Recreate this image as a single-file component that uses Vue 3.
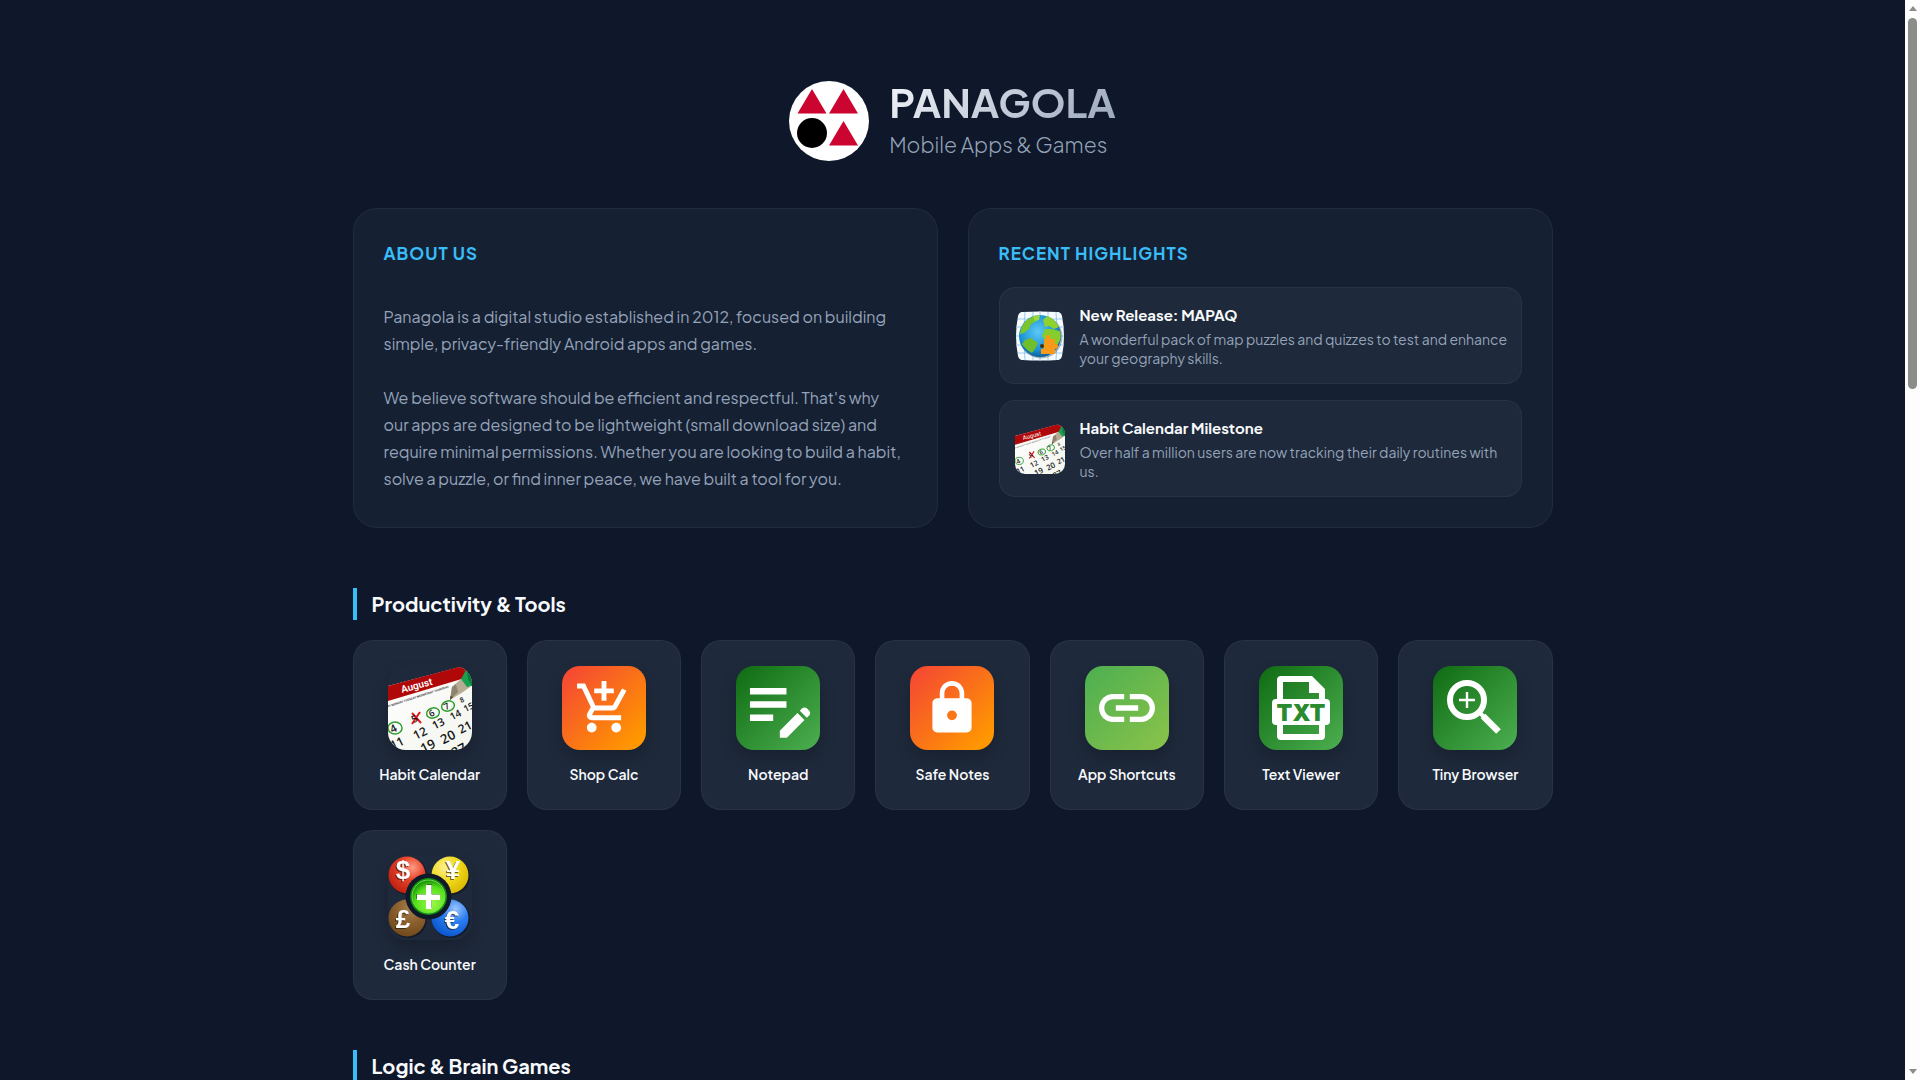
<script setup>
import { h } from 'vue';

const highlights = [
  {
    icon: 'mapaq',
    title: 'New Release: MAPAQ',
    text: 'A wonderful pack of map puzzles and quizzes to test and enhance your geography skills.'
  },
  {
    icon: 'calendar',
    title: 'Habit Calendar Milestone',
    text: 'Over half a million users are now tracking their daily routines with us.'
  }
];

const tools = [
  { id: 'calendar', name: 'Habit Calendar' },
  { id: 'cart', name: 'Shop Calc', tile: 'orange' },
  { id: 'notepad', name: 'Notepad', tile: 'green' },
  { id: 'lock', name: 'Safe Notes', tile: 'orange' },
  { id: 'link', name: 'App Shortcuts', tile: 'lime' },
  { id: 'txt', name: 'Text Viewer', tile: 'green' },
  { id: 'browser', name: 'Tiny Browser', tile: 'green' },
  { id: 'cash', name: 'Cash Counter' }
];

// calendar page digits: [label, x, y, size]
const days = [
  ['4', 7, 66, 11], ['5', 28, 56, 10], ['6', 45, 50, 9], ['7', 60, 43, 9], ['8', 75, 36, 7],
  ['11', 11, 81, 12], ['12', 34, 71, 12], ['13', 52, 61, 11], ['14', 69, 52, 10], ['15', 82, 44, 9],
  ['19', 42, 84, 13], ['20', 62, 75, 13], ['21', 79, 65, 12], ['27', 73, 88, 13]
];

// lettering printed on the calendar page
const CalendarText = () => h('g', { 'font-family': 'Roboto, sans-serif' }, [
  h('text', { x: 14, y: 27, 'font-size': 10, fill: '#fff', transform: 'rotate(-15 14 27)' }, 'August'),
  h('text', { x: -8, y: 44, 'font-size': 3, fill: '#333', transform: 'rotate(-18 -8 44)' }, 'SUNDAY MONDAY TUESDAY WEDNESDAY THURSDAY'),
  ...days.map(([label, x, y, size]) => h('text', {
    x,
    y,
    'font-family': 'Open Sans, sans-serif',
    'font-size': size,
    'font-weight': 600,
    'text-anchor': 'middle',
    fill: '#151515',
    transform: `rotate(-27 ${x} ${y})`
  }, label))
]);

// coin balls: [symbol, cx, cy, gradient, text x, text y]
const coins = [
  ['$', 19, 19, 'coin-red', 15, 23],
  ['¥', 62, 19, 'coin-yellow', 65, 23],
  ['£', 19, 62, 'coin-brown', 15, 72],
  ['€', 62, 62, 'coin-blue', 64, 73]
];
</script>

<template>
  <div class="window">
    <!-- shared icon artwork -->
    <svg class="defs" aria-hidden="true">
      <defs>
        <radialGradient id="coin-red" cx="0.65" cy="0.3" r="0.8">
          <stop offset="0" stop-color="#ff9c86" />
          <stop offset="0.4" stop-color="#e8452b" />
          <stop offset="1" stop-color="#b81c0c" />
        </radialGradient>
        <radialGradient id="coin-yellow" cx="0.35" cy="0.3" r="0.8">
          <stop offset="0" stop-color="#fdf08c" />
          <stop offset="0.5" stop-color="#f0d81a" />
          <stop offset="1" stop-color="#d8b400" />
        </radialGradient>
        <radialGradient id="coin-brown" cx="0.6" cy="0.25" r="0.8">
          <stop offset="0" stop-color="#a88050" />
          <stop offset="0.5" stop-color="#8a5f2c" />
          <stop offset="1" stop-color="#6e4619" />
        </radialGradient>
        <radialGradient id="coin-blue" cx="0.65" cy="0.25" r="0.8">
          <stop offset="0" stop-color="#9cc4ff" />
          <stop offset="0.45" stop-color="#2a7df0" />
          <stop offset="1" stop-color="#0a55cc" />
        </radialGradient>
        <radialGradient id="plus-green" cx="0.6" cy="0.7" r="0.7">
          <stop offset="0" stop-color="#9dfa4a" />
          <stop offset="0.7" stop-color="#58e01c" />
          <stop offset="1" stop-color="#189008" />
        </radialGradient>
        <radialGradient id="sea" cx="0.45" cy="0.4" r="0.6">
          <stop offset="0" stop-color="#5cc8f5" />
          <stop offset="0.7" stop-color="#1d94d6" />
          <stop offset="1" stop-color="#0c5f9c" />
        </radialGradient>
        <linearGradient id="paper" x1="0" y1="0" x2="1" y2="1">
          <stop offset="0" stop-color="#ffffff" />
          <stop offset="1" stop-color="#f3f5ee" />
        </linearGradient>
      </defs>

      <symbol id="calendar" viewBox="0 0 84 84">
        <path d="M0 20 72 1Q84 3 84 16V84H0Z" fill="url(#paper)" />
        <path d="M0 20 71 1Q77 1 81 6L77 12 0 35Z" fill="#b00808" />
        <g fill="none" stroke="#2f9e2f" stroke-width="1.5">
          <ellipse cx="7" cy="62" rx="7" ry="6" />
          <ellipse cx="45" cy="47" rx="6.5" ry="5" transform="rotate(-15 45 47)" />
          <ellipse cx="60" cy="40" rx="6.5" ry="5" transform="rotate(-15 60 40)" />
        </g>
        <path d="M24 47 33 57M32 46 24 58" stroke="#e01818" stroke-width="2" />
        <path d="M62 34 64 21 73 13 82 21 75 26Z" fill="#b8ab93" />
        <path d="M62 34 64 21 68 18 70 26Z" fill="#8f846d" />
        <path d="M62 34 62.5 30 65 31Z" fill="#4a4a40" />
        <path d="M73 13 78 4 84 8V20L79 21 76 17Z" fill="#18a050" />
        <path d="M79 4 84 8V20L80 13Z" fill="#0d7a3a" />
      </symbol>

      <symbol id="mapaq" viewBox="0 0 50 50">
        <path d="M7 1Q25 0 43 1Q46 1 47 5Q51 25 47 45Q46 49 43 49Q25 50 7 49Q4 49 3 45Q-1 25 3 5Q4 1 7 1Z" fill="#f6fbff" />
        <path
          d="M10 1Q7 25 10 49M18 1V49M25 0V50M33 1V49M41 1Q44 25 41 49M3 8H47M1 16H49M1 25H49M1 34H49M3 42H47"
          fill="none"
          stroke="#9cc9ee"
          stroke-width="1"
        />
        <circle cx="26" cy="26" r="21.5" fill="#59717e" opacity="0.5" />
        <circle cx="25" cy="25" r="21" fill="url(#sea)" />
        <path d="M7 15Q12 7 20 5L24 7 20 11 16 13 14 18 9 22 5 23Z" fill="#7cc62c" />
        <path d="M18 5 25 4 24 9 20 10Z" fill="#9ad83e" />
        <path d="M10 29 16 27 23 32 20 38 17 42Q10 38 7 33Z" fill="#6fbf2a" />
        <path d="M28 9 32 5Q40 8 44 16L39 18 34 15 30 16Z" fill="#8fd22e" />
        <path d="M30 18 36 18 45 20Q47 28 43 33L36 36 31 30 27 25Z" fill="#86cc2c" />
        <path d="M26 34H29V28H31Q30 24 33 24T35 28H40V33Q43 32 43 35T40 38V43H26V38Q29 38 29 36T26 34Z" fill="#f79a1a" />
        <circle cx="27" cy="35" r="2" fill="#4a3208" />
      </symbol>

      <symbol id="cart" viewBox="0 0 84 84">
        <path
          transform="translate(12.6 12.6) scale(2.45)"
          d="M11 9h2V6h3V4h-3V1h-2v3H8v2h3v3zm-4 9c-1.1 0-1.99.9-1.99 2S5.9 22 7 22s2-.9 2-2-.9-2-2-2zm10 0c-1.1 0-1.99.9-1.99 2s.89 2 1.99 2 2-.9 2-2-.9-2-2-2zm-9.83-3.25l.03-.12.9-1.63h7.45c.75 0 1.41-.41 1.75-1.03l3.86-7.01L19.42 4h-.01l-1.1 2-2.76 5H8.53l-.13-.27L6.16 6l-.95-2-.94-2H1v2h2l3.6 7.59-1.35 2.45c-.16.28-.25.61-.25.96 0 1.1.9 2 2 2h12v-2H7.42c-.13 0-.25-.11-.25-.25z"
        />
      </symbol>

      <symbol id="notepad" viewBox="0 0 84 84">
        <path
          transform="translate(4 2) scale(3.32)"
          d="M3 10h11v2H3v-2zm0-2h11V6H3v2zm0 8h7v-2H3v2zm15.01-3.13.71-.71c.39-.39 1.02-.39 1.41 0l.71.71c.39.39.39 1.02 0 1.41l-.71.71-2.12-2.12zm-.71.71-5.3 5.3V21h2.12l5.3-5.3-2.12-2.12z"
        />
      </symbol>

      <symbol id="lock" viewBox="0 0 84 84">
        <path
          transform="translate(12.6 12.6) scale(2.45)"
          d="M18 8h-1V6c0-2.76-2.24-5-5-5S7 3.24 7 6v2H6c-1.1 0-2 .9-2 2v10c0 1.1.9 2 2 2h12c1.1 0 2-.9 2-2V10c0-1.1-.9-2-2-2zm-6 9c-1.1 0-2-.9-2-2s.9-2 2-2 2 .9 2 2-.9 2-2 2zm3.1-9H8.9V6c0-1.71 1.39-3.1 3.1-3.1 1.71 0 3.1 1.39 3.1 3.1v2z"
        />
      </symbol>

      <symbol id="link" viewBox="0 0 84 84">
        <path
          transform="translate(8.4 8.4) scale(2.8)"
          d="M3.9 12c0-1.71 1.39-3.1 3.1-3.1h4V7H7c-2.76 0-5 2.24-5 5s2.24 5 5 5h4v-1.9H7c-1.71 0-3.1-1.39-3.1-3.1zM8 13h8v-2H8v2zm9-6h-4v1.9h4c1.71 0 3.1 1.39 3.1 3.1s-1.39 3.1-3.1 3.1h-4V17h4c2.76 0 5-2.24 5-5s-2.24-5-5-5z"
        />
      </symbol>

      <symbol id="txt" viewBox="0 0 84 84">
        <path
          fill-rule="evenodd"
          d="M22 10H53L66 23V70Q66 74 62 74H22Q18 74 18 70V14Q18 10 22 10ZM24 16V34H60V27H50V16ZM24 58V68H60V58Z"
        />
        <rect x="13" y="33" width="58" height="26" rx="4" />
      </symbol>

      <symbol id="browser" viewBox="0 0 84 84">
        <circle cx="34" cy="34" r="17" fill="none" stroke="#fff" stroke-width="6" />
        <path d="M26 34H42M34 26V42" stroke="#fff" stroke-width="2.4" />
        <path d="M46 46 52 52" stroke="#fff" stroke-width="4" />
        <path d="M50 50 65.5 65.5" stroke="#fff" stroke-width="6.5" />
      </symbol>

      <symbol id="cash" viewBox="0 0 84 84">
        <g v-for="[symbol, cx, cy, fill] in coins" :key="symbol">
          <circle :cx="cx + 1" :cy="cy + 1" r="19" fill="#0b1220" opacity="0.6" />
          <circle :cx="cx" :cy="cy" r="18.5" :fill="`url(#${fill})`" />
        </g>
        <circle cx="40.5" cy="40.5" r="23" fill="#10192a" />
        <circle cx="40.5" cy="40.5" r="18.5" fill="#128a0c" />
        <circle cx="40.5" cy="40.5" r="16.5" fill="url(#plus-green)" stroke="#6fe04a" stroke-width="1" />
        <path d="M39 28H44V38H52V43H44V52H39V43H28V38H39Z" fill="#1c7010" opacity="0.8" />
        <path d="M38 29H43.5V38.5H52V44H43.5V53H38V44H29V38.5H38Z" fill="#fff" />
      </symbol>
    </svg>

    <main class="page">
      <div class="container">
        <header class="brand">
          <svg class="logo" viewBox="0 0 80 80" role="img" aria-label="Panagola logo">
            <circle cx="40" cy="40" r="40" fill="#fff" />
            <path d="M23 8 37.5 32.5H8.5ZM54.5 8 69 32.5H40ZM54.5 40 69 64.5H40Z" fill="#cc0530" />
            <circle cx="23" cy="52" r="15" fill="#000" />
          </svg>
          <div>
            <h1>PANAGOLA</h1>
            <p>Mobile Apps &amp; Games</p>
          </div>
        </header>

        <div class="intro">
          <section class="panel">
            <h2>About Us</h2>
            <div class="about">
              <p>Panagola is a digital studio established in 2012, focused on building simple, privacy-friendly Android apps and games.</p>
              <p>We believe software should be efficient and respectful. That's why our apps are designed to be lightweight (small download size) and require minimal permissions. Whether you are looking to build a habit, solve a puzzle, or find inner peace, we have built a tool for you.</p>
            </div>
          </section>

          <section class="panel">
            <h2>Recent Highlights</h2>
            <div class="highlights">
              <a v-for="item in highlights" :key="item.title" class="highlight" href="#">
                <svg class="highlight-icon" :viewBox="item.icon === 'calendar' ? '0 0 84 84' : '0 0 50 50'">
                  <use :href="`#${item.icon}`" />
                  <CalendarText v-if="item.icon === 'calendar'" />
                </svg>
                <div>
                  <h3>{{ item.title }}</h3>
                  <p>{{ item.text }}</p>
                </div>
              </a>
            </div>
          </section>
        </div>

        <section class="category">
          <h2>Productivity &amp; Tools</h2>
          <div class="grid">
            <a v-for="app in tools" :key="app.id" class="app" href="#">
              <svg class="app-icon" :class="app.tile" viewBox="0 0 84 84">
                <use :href="`#${app.id}`" />
                <CalendarText v-if="app.id === 'calendar'" />
                <text v-else-if="app.id === 'txt'" class="txt-label" x="42" y="55">TXT</text>
                <template v-else-if="app.id === 'cash'">
                  <text v-for="coin in coins" :key="coin[0]" class="coin" :x="coin[4]" :y="coin[5]">{{ coin[0] }}</text>
                </template>
              </svg>
              <span>{{ app.name }}</span>
            </a>
          </div>
        </section>

        <section class="category">
          <h2>Logic &amp; Brain Games</h2>
        </section>
      </div>
    </main>

    <div class="scrollbar" aria-hidden="true">
      <i class="arrow up"></i>
      <div class="track"><div class="thumb"></div></div>
      <i class="arrow down"></i>
    </div>
  </div>
</template>

<style>
body {
  margin: 0;
  background: #0f172a;
}
</style>

<style scoped>
.window {
  display: flex;
  height: 100vh;
  overflow: hidden;
  background: #0f172a;
  color: #f8fafc;
  font-family: "Plus Jakarta Sans", Inter, "Liberation Sans", sans-serif;
}

.defs {
  position: absolute;
  width: 0;
  height: 0;
}

.page {
  flex: 1;
  min-width: 0;
  overflow: hidden;
}

.container {
  max-width: 1200px;
  margin: 0 auto;
}

h1, h2, h3, p {
  margin: 0;
}

a {
  color: inherit;
  text-decoration: none;
}

/* Header */
.brand {
  display: flex;
  align-items: center;
  justify-content: center;
  gap: 20px;
  padding: 78px 0 44px;
}

.logo {
  width: 80px;
  height: 80px;
}

.brand h1 {
  font-size: 40px;
  line-height: 48px;
  font-weight: 700;
  background: linear-gradient(135deg, #f1f4f9, #9aa7bc);
  background-clip: text;
  color: transparent;
}

.brand p {
  font-size: 21px;
  line-height: 38px;
  font-weight: 300;
  color: #94a3b8;
}

/* About + highlights */
.intro {
  display: grid;
  grid-template-columns: repeat(auto-fit, minmax(400px, 1fr));
  gap: 30px;
  margin-bottom: 60px;
}

.panel {
  padding: 30px;
  border: 1px solid rgba(255, 255, 255, 0.05);
  border-radius: 24px;
  background: rgba(30, 41, 59, 0.5);
}

.panel h2 {
  margin-bottom: 20px;
  font-size: 17px;
  line-height: 28px;
  font-weight: 700;
  letter-spacing: 1px;
  text-transform: uppercase;
  color: #38bdf8;
}

.about {
  display: flex;
  flex-direction: column;
  gap: 27px;
  padding-top: 16px;
  font-size: 16px;
  line-height: 27px;
  color: #94a3b8;
}

.highlights {
  display: flex;
  flex-direction: column;
  gap: 16px;
}

.highlight {
  display: flex;
  align-items: center;
  gap: 15px;
  padding: 15px 10px 15px 15px;
  border: 1px solid rgba(255, 255, 255, 0.05);
  border-radius: 16px;
  background: #1e293b;
}

.highlight-icon {
  flex: none;
  width: 50px;
  height: 50px;
  border-radius: 10px;
}

.highlight h3 {
  margin-bottom: 4px;
  font-size: 15px;
  line-height: 23px;
  font-weight: 700;
}

.highlight p {
  font-size: 14px;
  line-height: 19px;
  color: #94a3b8;
}

/* App categories */
.category {
  margin-bottom: 50px;
}

.category h2 {
  margin-bottom: 20px;
  padding-left: 15px;
  border-left: 4px solid #38bdf8;
  font-size: 20px;
  line-height: 32px;
  font-weight: 700;
}

.grid {
  display: grid;
  grid-template-columns: repeat(auto-fill, minmax(140px, 1fr));
  gap: 20px;
}

.app {
  display: flex;
  flex-direction: column;
  align-items: center;
  gap: 14px;
  padding: 25px 10px;
  border: 1px solid rgba(255, 255, 255, 0.05);
  border-radius: 20px;
  background: #1e293b;
  font-size: 14px;
  line-height: 20px;
  font-weight: 600;
}

.app-icon {
  width: 84px;
  height: 84px;
  border-radius: 18px;
  fill: #fff;
  box-shadow: 0 8px 16px rgba(0, 0, 0, 0.2);
}

.orange {
  background: linear-gradient(135deg, #f44336, #ff9800 90%);
}

.green {
  background: linear-gradient(135deg, #0f6b12, #4caf50);
}

.lime {
  background: linear-gradient(135deg, #4caf50, #8bc34a);
}

.txt-label {
  font: 900 23px Inter, sans-serif;
  text-anchor: middle;
  fill: #2a8a2e;
}

.coin {
  font: bold 26px "Liberation Sans", sans-serif;
  text-anchor: middle;
  fill: #fff;
  filter: drop-shadow(-1px 1px 0 rgba(26, 18, 8, 0.6));
}

/* Scrollbar */
.scrollbar {
  display: flex;
  flex-direction: column;
  align-items: center;
  justify-content: space-between;
  gap: 7px;
  width: 15px;
  padding: 6px 0;
  box-sizing: border-box;
  background: #fdfdfd;
}

.arrow {
  border: 4px solid transparent;
}

.up {
  border-top: 0;
  border-bottom: 5px solid #8b8b8b;
}

.down {
  border-bottom: 0;
  border-top: 5px solid #8b8b8b;
}

.track {
  flex: 1;
  width: 9px;
}

.thumb {
  height: 35.5%;
  border-radius: 5px;
  background: #8b8d88;
}
</style>
